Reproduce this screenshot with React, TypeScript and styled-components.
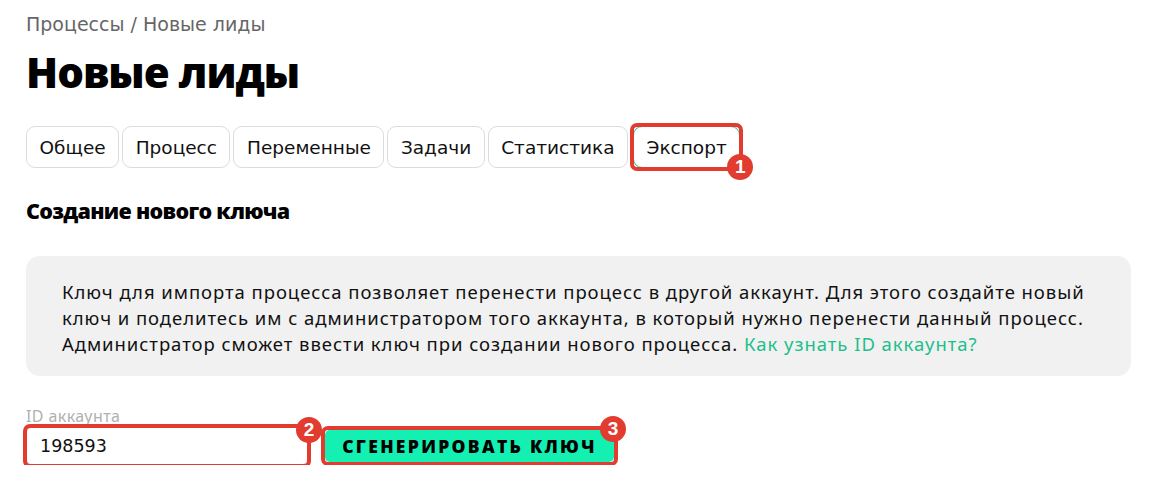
import React from "react";
import styled, { createGlobalStyle } from "styled-components";

const GlobalStyle = createGlobalStyle`
  body {
    margin: 0;
    background: #fff;
    font-family: "Noto Sans", "Open Sans", sans-serif;
    color: #111;
  }
`;

const Page = styled.main`
  padding: 12px 36px 0 26px;
  display: flex;
  flex-direction: column;
`;

const Crumbs = styled.div`
  font-family: "DejaVu Sans", sans-serif;
  font-size: 19px;
  line-height: 24px;
  color: #666;
`;

const Title = styled.h1`
  margin: 9px 0 0;
  font-family: "Open Sans", sans-serif;
  font-size: 42px;
  line-height: 54px;
  font-weight: 800;
  color: #000;
  letter-spacing: -1px;
`;

const Tabs = styled.nav`
  display: flex;
  gap: 3px;
  margin-top: 27px;
`;

const Tab = styled.button<{ $active?: boolean }>`
  height: 42px;
  padding: 0 12.5px;
  background: #fff;
  border: 1px solid ${(p) => (p.$active ? "#1ec88f" : "#dcdcdc")};
  border-radius: 9px;
  font-family: "DejaVu Sans", sans-serif;
  font-size: 18.5px;
  color: #111;
  cursor: pointer;
`;

const Mark = styled.div`
  position: relative;
  display: inline-flex;
`;

const Frame = styled.span<{ $pad: number }>`
  position: absolute;
  inset: ${(p) => -p.$pad}px;
  border: 4px solid #e23b30;
  border-radius: 7px;
  pointer-events: none;
`;

const Badge = styled.span<{ $right: number; $top: number }>`
  position: absolute;
  right: ${(p) => p.$right}px;
  top: ${(p) => p.$top}px;
  width: 26px;
  height: 26px;
  border-radius: 50%;
  background: #e23b30;
  color: #fff;
  font-family: "Liberation Sans", Arial, sans-serif;
  font-weight: 700;
  font-size: 19px;
  line-height: 26px;
  text-align: center;
`;

const Subtitle = styled.h2`
  margin: 28px 0 0;
  font-family: "Open Sans", sans-serif;
  font-size: 21.5px;
  line-height: 30px;
  font-weight: 800;
  letter-spacing: -0.7px;
  color: #000;
`;

const Note = styled.div`
  margin-top: 30px;
  background: #f1f1f1;
  border-radius: 14px;
  padding: 23px 36px 19px;
  font-size: 18.5px;
  line-height: 26px;
  letter-spacing: 0.95px;
  color: #111;
`;

const Link = styled.a`
  color: #1dbf8c;
  text-decoration: none;
`;

const Label = styled.label`
  margin-top: 30px;
  font-size: 16px;
  line-height: 20px;
  letter-spacing: 0.4px;
  color: #b0b0b0;
`;

const Row = styled.div`
  display: flex;
  align-items: center;
  gap: 17px;
  margin-top: 1px;
`;

const Input = styled.input`
  width: 282px;
  height: 38px;
  box-sizing: border-box;
  padding: 0 13px;
  border: 1px solid #dcdcdc;
  border-radius: 6px;
  font-family: "DejaVu Sans", sans-serif;
  font-size: 17.5px;
  color: #111;
  outline: none;
`;

const Generate = styled.button`
  width: 289px;
  height: 32px;
  border: none;
  border-radius: 5px;
  background: #14efb2;
  font-family: "Open Sans", sans-serif;
  font-size: 17.5px;
  font-weight: 800;
  letter-spacing: 2.3px;
  text-transform: uppercase;
  color: #000;
  cursor: pointer;
`;

const tabs = ["Общее", "Процесс", "Переменные", "Задачи", "Статистика"];

export default function App() {
  return (
    <>
      <GlobalStyle />
      <Page>
        <Crumbs>Процессы / Новые лиды</Crumbs>
        <Title>Новые лиды</Title>
        <Tabs>
          {tabs.map((t) => (
            <Tab key={t}>{t}</Tab>
          ))}
          <Mark style={{ marginLeft: 2 }}>
            <Tab $active>Экспорт</Tab>
            <Frame $pad={3} />
            <Badge $right={-13} $top={28}>1</Badge>
          </Mark>
        </Tabs>
        <Subtitle>Создание нового ключа</Subtitle>
        <Note>
          Ключ для импорта процесса позволяет перенести процесс в другой аккаунт. Для этого создайте новый
          <br />
          ключ и поделитесь им с администратором того аккаунта, в который нужно перенести данный процесс.
          <br />
          Администратор сможет ввести ключ при создании нового процесса.{" "}
          <Link href="#">Как узнать ID аккаунта?</Link>
        </Note>
        <Label>ID аккаунта</Label>
        <Row>
          <Mark>
            <Input defaultValue="198593" />
            <Frame $pad={3} />
            <Badge $right={-14} $top={-10}>2</Badge>
          </Mark>
          <Mark>
            <Generate>Сгенерировать ключ</Generate>
            <Frame $pad={4} />
            <Badge $right={-12} $top={-14}>3</Badge>
          </Mark>
        </Row>
      </Page>
    </>
  );
}
